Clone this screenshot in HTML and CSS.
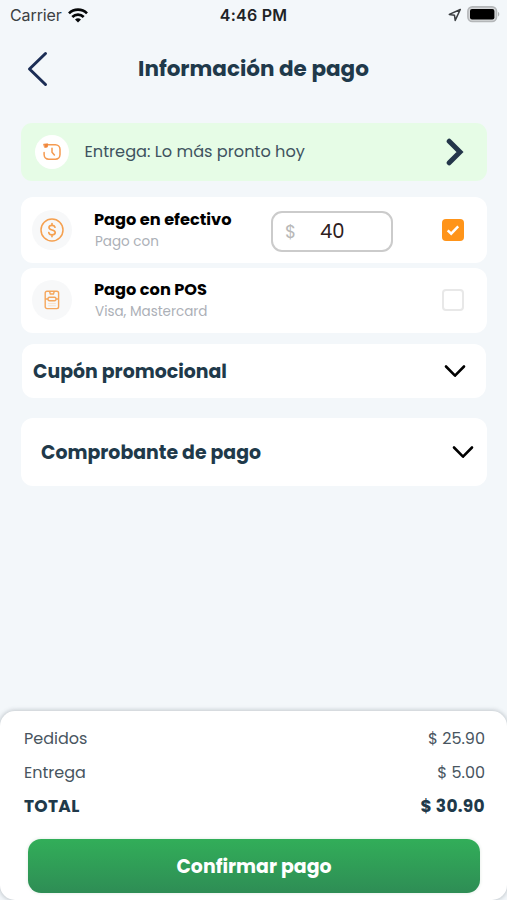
FILE: index.html
```html
<!DOCTYPE html>
<html lang="es">
<head>
<meta charset="utf-8">
<meta name="viewport" content="width=device-width, initial-scale=1">
<title>Información de pago</title>
<link rel="stylesheet" href="styles.css">
</head>
<body>
<div class="screen">
  <div class="status">
    <div class="status-left"><span class="carrier">Carrier</span>
      <svg class="wifi" width="20" height="15" viewBox="0 0 20 15" fill="none" stroke="#050708" stroke-width="2.7"><path d="M1 5.4a12.8 12.8 0 0 1 18 0"/><path d="M4.3 9a8.2 8.2 0 0 1 11.4 0"/><path d="M10 14.6l-3-3a4.3 4.3 0 0 1 6 0z" fill="#050708" stroke="none"/></svg>
    </div>
    <span class="time">4:46 PM</span>
    <div class="status-right">
      <svg width="14" height="14" viewBox="0 0 14 14" fill="none" stroke="#3a3d40" stroke-width="1.5" stroke-linejoin="round"><path d="M12.3 1.5L1.3 6.4l5.2.9.7 5.1z"/></svg>
      <svg width="33" height="17" viewBox="0 0 33 17"><rect x=".9" y=".9" width="28.6" height="14.6" rx="4.4" fill="#d5d7d9" stroke="#b4b7b9" stroke-width="1.6"/><rect x="3" y="3" width="24.4" height="10.4" rx="2" fill="#000"/><path d="M31 6v4.4c1.7-.6 1.7-3.8 0-4.4z" fill="#aeb1b3"/></svg>
    </div>
  </div>
  <header class="header">
    <svg class="back" width="22" height="36" viewBox="0 0 22 36" fill="none" stroke="#1b2d55" stroke-width="3" stroke-linecap="round" stroke-linejoin="round"><path d="M18.5 2.5L2.5 18l16 15.5"/></svg>
    <h1>Información de pago</h1>
  </header>

  <main>
    <div class="delivery">
      <span class="bubble small">
        <svg width="20" height="20" viewBox="0 0 20 20" fill="none" stroke="#f59a50" stroke-width="1.5" stroke-linecap="round" stroke-linejoin="round"><path d="M4.5 2.8h8.9A4.6 4.6 0 0 1 18 7.400v5.200a4.600 4.600 0 0 1-4.600 4.600H6.700A4.600 4.600 0 0 1 2.100 12.600V10.500"/><path d="M10 6.300v4l2.400 2.700"/><path d="M1.900 2.200l3.800-.4-.4 3.300-2.300.3z" fill="#f0873b" stroke="#f0873b" stroke-width=".8"/></svg>
      </span>
      <span class="delivery-text">Entrega: Lo más pronto hoy</span>
      <svg class="next" width="18" height="28" viewBox="0 0 18 28" fill="none" stroke="#24364a" stroke-width="5" stroke-linecap="round"><path d="M3.200 3.200L14 14 3.200 24.800"/></svg>
    </div>

    <div class="method cash">
      <span class="bubble">
        <svg width="24" height="24" viewBox="0 0 24 24" fill="none" stroke="#f5a04f" stroke-width="1.500" stroke-linecap="round"><circle cx="12" cy="12" r="11"/><path d="M15 9.200C14.500 7.600 13.300 7.300 12 7.300c-1.800 0-3 .8-3 2.200 0 3.300 6.200 1.700 6.200 5 0 1.500-1.300 2.300-3.100 2.300-1.700 0-3-.7-3.300-2.200M12 5.500v1.700M12 16.900v1.700" stroke-width="1.700"/></svg>
      </span>
      <div class="labels"><strong>Pago en efectivo</strong><small>Pago con</small></div>
      <div class="amount"><span class="currency">$</span><span class="value">40</span></div>
      <span class="check on"><svg width="22" height="22" viewBox="0 0 22 22" fill="none" stroke="#fff" stroke-width="2.500"><path d="M5.700 11.300l3.500 3.400 7-7.300"/></svg></span>
    </div>

    <div class="method pos">
      <span class="bubble">
        <svg width="16" height="20" viewBox="0 0 16 20" fill="none" stroke="#f5a75d" stroke-width="1.400" stroke-linejoin="round"><rect x="1.200" y="1.200" width="13.400" height="17.400" rx="1.800"/><path d="M5.500 1.200l.8 2.800h3.200l.8-2.800"/><rect x="4" y="7.200" width="8" height="3.600" rx="1.500"/><path d="M1.200 9H4M12 9h2.600"/><path d="M4.200 13.600h7.600M4.200 15.800h7.600" stroke="#fae0c6" stroke-width="1"/></svg>
      </span>
      <div class="labels"><strong>Pago con POS</strong><small>Visa, Mastercard</small></div>
      <span class="check"></span>
    </div>

    <div class="fold coupon"><h2>Cupón promocional</h2>
      <svg width="22" height="14" viewBox="0 0 22 14" fill="none" stroke="#000" stroke-width="2.600" stroke-linecap="round" stroke-linejoin="round"><path d="M2 2.500l9 9.200 9-9.200"/></svg>
    </div>
    <div class="fold receipt"><h2>Comprobante de pago</h2>
      <svg width="22" height="14" viewBox="0 0 22 14" fill="none" stroke="#000" stroke-width="2.600" stroke-linecap="round" stroke-linejoin="round"><path d="M2 2.500l9 9.200 9-9.200"/></svg>
    </div>
  </main>

  <footer class="summary">
    <div class="row"><span>Pedidos</span><span>$ 25.90</span></div>
    <div class="row"><span>Entrega</span><span>$ 5.00</span></div>
    <div class="row total"><span>TOTAL</span><span>$ 30.90</span></div>
    <button class="confirm" type="button">Confirmar pago</button>
  </footer>
</div>
</body>
</html>
```
FILE: styles.css
```css
* { box-sizing: border-box; }
body {
  margin: 0;
  background: #f3f7fa;
  font-family: Poppins, Inter, "Liberation Sans", sans-serif;
  font-feature-settings: "cv11";
  color: #22384a;
}
.screen { width: 507px; height: 900px; display: flex; flex-direction: column; overflow: hidden; white-space: nowrap; }
.status { display: grid; grid-template-columns: 1fr auto 1fr; align-items: center; height: 30px; padding: 0 7px 0 10px; font-family: Inter, "Liberation Sans", sans-serif; font-size: 16px; line-height: 20px; font-feature-settings: normal; }
.status-left { display: flex; align-items: center; gap: 6px; color: #3c4043; }
.carrier { width: 52px; letter-spacing: -.1px; }
.time { color: #202326; font-weight: 600; letter-spacing: .25px; margin-left: -3px; }
.status-right { display: flex; align-items: center; justify-content: flex-end; gap: 5px; }
.status-right svg:last-child { margin-top: -2px; }
.header { display: grid; grid-template-columns: 60px 1fr 60px; align-items: center; height: 78px; }
.back { margin-left: 27px; }
h1, h2 { margin: 0; font-weight: 700; color: #20394a; }
h1 { font-size: 21.5px; text-align: center; line-height: 30px; }
main { padding: 15px 20px 0 21px; flex: 1; display: flex; flex-direction: column; }
.bubble { width: 40px; height: 40px; border-radius: 50%; background: #f7f8f9; display: grid; place-items: center; flex: none; }
.bubble.small { width: 34px; height: 34px; background: #fff; }
.delivery { height: 58px; border-radius: 11px; background: #e6fce6; display: flex; align-items: center; padding: 0 23px 0 14px; }
.delivery-text { margin-left: 15.5px; flex: 1; font-size: 16.2px; line-height: 24px; margin-top: -1px; color: #40535f; }
.method { background: #fff; border-radius: 12px; display: flex; align-items: center; padding: 0 23px 0 11px; }
.cash { margin-top: 16px; height: 66px; }
.pos { margin-top: 5px; height: 65px; }
.pos .bubble, .pos .check { margin-bottom: 1px; }
.labels { display: flex; flex-direction: column; margin-left: 22px; flex: 1; }
.labels strong { font-size: 16.2px; line-height: 22px; color: #000; font-weight: 700; }
.labels small { font-size: 13.5px; line-height: 21px; color: #acb0b7; margin-left: 1px; }
.amount { width: 122px; height: 41px; border: 2px solid #cbcbcb; border-radius: 11px; margin: 2px 49px 0 0; display: flex; align-items: center; padding-left: 12px; }
.currency { font-size: 18px; color: #b8b8b8; width: 35px; }
.value { font-size: 19.5px; color: #2e2020; }
.check { width: 22px; height: 22px; border: 2px solid #e8e8e8; border-radius: 4px; flex: none; display: block; }
.check.on { border: 0; background: #ff9419; }
.check svg { display: block; }
.fold { background: #fff; display: flex; align-items: center; justify-content: space-between; border-radius: 12px; }
.fold h2 { font-size: 18.9px; line-height: 28px; padding-top: 1px; }
.coupon { margin: 11px 1px 0; height: 54px; padding: 0 20px 0 11px; }
.receipt { margin-top: 20px; height: 68px; padding: 0 13px 0 20px; }
.summary { height: 189px; background: #fff; border-radius: 15px; box-shadow: 0 0 4px 1px rgba(70,80,90,.28); padding: 10px 22px 7px 24px; display: flex; flex-direction: column; }
.row { display: flex; justify-content: space-between; align-items: center; height: 34px; font-size: 16px; color: #485560; }
.total { height: 33px; color: #20394a; font-size: 17px; font-weight: 700; letter-spacing: .3px; }
.confirm { margin: 17px 5px 0 4px; height: 54px; border: 0; border-radius: 13px; padding: 0; background: linear-gradient(#32ae59, #2e8d55); box-shadow: 0 0 3px 1px #edf2ee; color: #fff; font: inherit; font-feature-settings: inherit; font-size: 18.9px; font-weight: 700; }
```
